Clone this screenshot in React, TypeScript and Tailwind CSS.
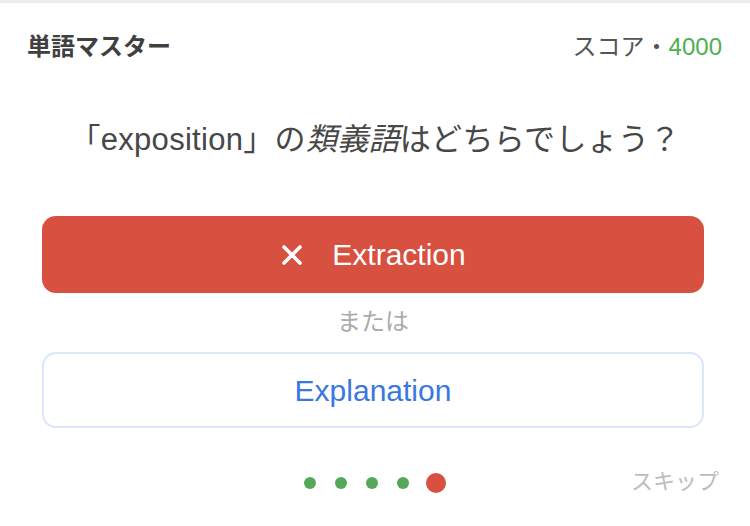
import React from "react";

const jp = "font-['Liberation_Sans','Noto_Sans_CJK_JP',sans-serif]";

const XMark: React.FC = () => (
  <svg width="24" height="24" viewBox="0 0 24 24" fill="none" stroke="white" strokeWidth="3.6" strokeLinecap="round">
    <path d="M4 4 L20 20" />
    <path d="M20 4 L4 20" />
  </svg>
);

export default function App() {
  const results = ["ok", "ok", "ok", "ok", "miss"];
  return (
    <div className={`w-[750px] h-[526px] bg-white border-t-[3px] border-[#ececec] overflow-hidden ${jp}`}>
      <div className="flex items-center justify-between pl-[27px] pr-[28px] pt-[30px] h-[58px]">
        <h1 className="text-[24px] font-bold text-[#404040] leading-none">単語マスター</h1>
        <div className="text-[24px] text-[#555] leading-none">
          スコア・<span className="text-[#4caf50]">4000</span>
        </div>
      </div>

      <p className="mt-[61px] text-center text-[31px] tracking-[0.3px] text-[#474747] leading-[36px]">
        「exposition」の<span className="italic">類義語</span>はどちらでしょう？
      </p>

      <div className="px-[42px] mt-[58px] pr-[46px]">
        <button className="w-full h-[77px] rounded-[14px] bg-[#d85040] flex items-center justify-center gap-[28px] text-white text-[30px]">
          <XMark />
          <span>Extraction</span>
        </button>

        <div className="mt-[14px] h-[30px] text-center text-[24px] leading-[30px] text-[#ababab]">または</div>

        <button className="mt-[15px] w-full h-[76px] rounded-[14px] border-2 border-[#dbe6fb] bg-white flex items-center justify-center text-[30px] text-[#3a78e0]">
          Explanation
        </button>
      </div>

      <div className="relative mt-[45px] h-[20px] flex items-center justify-center">
        <div className="flex items-center gap-[19px]">
          {results.map((r, i) =>
            r === "ok" ? (
              <span key={i} className="w-[12px] h-[12px] rounded-full bg-[#55a85a]" />
            ) : (
              <span key={i} className="w-[20px] h-[20px] rounded-full bg-[#d85040] -ml-[2px]" />
            )
          )}
        </div>
        <span className="absolute right-[31px] top-[-2px] text-[22px] leading-none text-[#bdbdbd]">スキップ</span>
      </div>
    </div>
  );
}
